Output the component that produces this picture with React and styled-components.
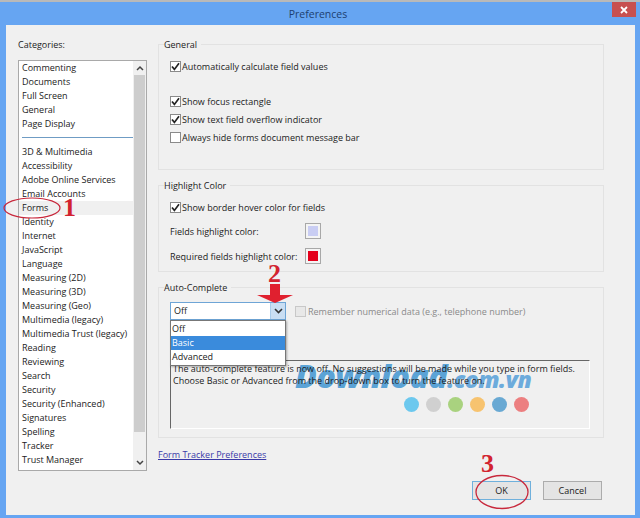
import React from 'react';
import styled, { createGlobalStyle } from 'styled-components';

const categoriesTop = ['Commenting', 'Documents', 'Full Screen', 'General', 'Page Display'];
const categories = [
  '3D & Multimedia', 'Accessibility', 'Adobe Online Services', 'Email Accounts', 'Forms', 'Identity',
  'Internet', 'JavaScript', 'Language', 'Measuring (2D)', 'Measuring (3D)', 'Measuring (Geo)',
  'Multimedia (legacy)', 'Multimedia Trust (legacy)', 'Reading', 'Reviewing', 'Search', 'Security',
  'Security (Enhanced)', 'Signatures', 'Spelling', 'Tracker', 'Trust Manager', 'Units',
];
const dots = ['#6cc8ee', '#d0d0d0', '#a9d27f', '#f7c36f', '#69a9d3', '#ec7f80'];

const Check = ({ checked, disabled }) => (
  <CheckBox $disabled={disabled}>
    {checked && (
      <svg width="9" height="9" viewBox="0 0 9 9">
        <path d="M1 4.5 L3.4 7.4 L8 1.2" fill="none" stroke="#222" strokeWidth="1.7" />
      </svg>
    )}
  </CheckBox>
);

const App = () => {
  return (
    <Page>
      <GlobalStyle />
      <TopStrip />
      <TitleBar>
        <span />
        <Title>Preferences</Title>
        <CloseBtn>
          <svg width="8" height="8" viewBox="0 0 8 8">
            <path d="M1 1 L7 7 M7 1 L1 7" stroke="#fff" strokeWidth="1.8" />
          </svg>
        </CloseBtn>
      </TitleBar>
      <Content>
        <LeftCol>
          <CatLabel>Categories:</CatLabel>
          <ListBox>
            <List>
              {categoriesTop.map((c) => <Item key={c}>{c}</Item>)}
              <Divider />
              {categories.map((c) => <Item key={c} $active={c === 'Forms'}>{c}</Item>)}
            </List>
            <ScrollBar>
              <ScrollArrow>
                <svg width="8" height="6" viewBox="0 0 8 6"><path d="M1 5 L4 2 L7 5" fill="none" stroke="#444" strokeWidth="1.5" /></svg>
              </ScrollArrow>
              <Thumb />
              <ScrollArrow>
                <svg width="8" height="6" viewBox="0 0 8 6"><path d="M1 1 L4 4 L7 1" fill="none" stroke="#444" strokeWidth="1.5" /></svg>
              </ScrollArrow>
            </ScrollBar>
          </ListBox>
        </LeftCol>
        <RightCol>
          <GeneralGroup>
            <Legend>General</Legend>
            <CheckRow><Check checked />Automatically calculate field values</CheckRow>
            <CheckRow $gap={17}><Check checked />Show focus rectangle</CheckRow>
            <CheckRow><Check checked />Show text field overflow indicator</CheckRow>
            <CheckRow><Check />Always hide forms document message bar</CheckRow>
          </GeneralGroup>
          <HighlightGroup>
            <Legend>Highlight Color</Legend>
            <CheckRow><Check checked />Show border hover color for fields</CheckRow>
            <ColorRow $gap={7}>
              <ColorLabel>Fields highlight color:</ColorLabel>
              <Swatch $color="#c9cdf3" />
            </ColorRow>
            <ColorRow $gap={9}>
              <ColorLabel>Required fields highlight color:</ColorLabel>
              <Swatch $color="#e4001b" />
            </ColorRow>
          </HighlightGroup>
          <AutoGroup>
            <Legend>Auto-Complete</Legend>
            <ComboRow>
              <ComboWrap>
                <Combo>
                  <ComboValue>Off</ComboValue>
                  <ComboBtn>
                    <svg width="9" height="6" viewBox="0 0 9 6"><path d="M1 1 L4.5 4.5 L8 1" fill="none" stroke="#333" strokeWidth="1.6" /></svg>
                  </ComboBtn>
                </Combo>
                <Menu>
                  <MenuItem>Off</MenuItem>
                  <MenuItem $selected>Basic</MenuItem>
                  <MenuItem>Advanced</MenuItem>
                </Menu>
              </ComboWrap>
              <Check disabled />
              <DisabledText>Remember numerical data (e.g., telephone number)</DisabledText>
            </ComboRow>
            <DescBox>
              <Watermark>Download<WmSuffix>.com.vn</WmSuffix></Watermark>
              <DescText>
                The auto-complete feature is now off. No suggestions will be made while you type in form fields.<br />
                Choose Basic or Advanced from the drop-down box to turn the feature on.
              </DescText>
              <Dots>
                {dots.map((d) => <Dot key={d} $color={d} />)}
              </Dots>
            </DescBox>
          </AutoGroup>
          <TrackerLink href="#">Form Tracker Preferences</TrackerLink>
          <Footer>
            <Button $primary>OK</Button>
            <Button>Cancel</Button>
          </Footer>
        </RightCol>
      </Content>

      <FormsRing width="60" height="24" viewBox="0 0 60 24">
        <ellipse cx="30" cy="12" rx="28" ry="10" fill="none" stroke="#c8283c" strokeWidth="1.2" />
      </FormsRing>
      <StepOne>1</StepOne>
      <StepTwo>2</StepTwo>
      <StepArrow width="40" height="22" viewBox="0 0 40 22">
        <path d="M16 1 H26 V12 H39 L21 20 L3 12 H16 Z" fill="#e0202f" />
      </StepArrow>
      <StepThree>3</StepThree>
      <OkRing width="56" height="36" viewBox="0 0 56 36">
        <ellipse cx="28" cy="18" rx="26" ry="16.5" fill="none" stroke="#c8283c" strokeWidth="1.3" />
      </OkRing>
    </Page>
  );
};

export default App;

const GlobalStyle = createGlobalStyle`
html,body{
    margin:0;
    padding:0;
    background:#f0f0f0;
}
`
const Page = styled.div`
position:relative;
width:640px;
height:518px;
overflow:hidden;
display:flex;
flex-direction:column;
background:#66a5f2;
font-family:"Open Sans","Noto Sans",sans-serif;
font-size:9px;
color:#222;
`
const TopStrip = styled.div`
height:2px;
background:#b9b9b9;
`
const TitleBar = styled.div`
height:23px;
display:grid;
grid-template-columns:1fr auto 1fr;
align-items:start;
padding-right:4px;
`
const Title = styled.div`
font-size:10.5px;
line-height:24px;
color:#1d3f70;
`
const CloseBtn = styled.div`
justify-self:end;
width:24px;
height:15px;
background:#c75050;
display:flex;
align-items:center;
justify-content:center;
`
const Content = styled.div`
flex:1;
display:flex;
gap:11px;
margin:0 5px 3px 6px;
padding:12px 31px 0 12px;
background:#f0f0f0;
min-height:0;
`
const LeftCol = styled.div`
width:129px;
flex-shrink:0;
`
const CatLabel = styled.div`
height:14px;
line-height:16px;
margin-bottom:9px;
`
const ListBox = styled.div`
height:411px;
box-sizing:border-box;
border:1px solid #a9a9a9;
background:#fff;
display:flex;
overflow:hidden;
`
const List = styled.div`
flex:1;
min-width:0;
`
const Item = styled.div`
height:14px;
line-height:14px;
padding-left:3px;
white-space:nowrap;
background:${(p) => (p.$active ? '#f0f0f0' : 'transparent')};
`
const Divider = styled.div`
height:1px;
margin:6px 0 7px 3px;
background:#6f9cc4;
`
const ScrollBar = styled.div`
width:13px;
display:flex;
flex-direction:column;
background:#f0f0f0;
`
const ScrollArrow = styled.div`
height:14px;
display:flex;
align-items:center;
justify-content:center;
`
const Thumb = styled.div`
flex:1;
background:#cdcdcd;
margin:0 1px 24px 1px;
`
const RightCol = styled.div`
flex:1;
min-width:0;
display:flex;
flex-direction:column;
`
const Group = styled.fieldset`
margin:0;
padding:0 11px;
border:1px solid #e2e2e2;
min-width:0;
`
const GeneralGroup = styled(Group)`
padding-top:6px;
padding-bottom:23px;
`
const HighlightGroup = styled(Group)`
margin-top:8px;
padding-top:6px;
padding-bottom:7px;
`
const AutoGroup = styled(Group)`
margin-top:8px;
padding-top:8px;
padding-bottom:8px;
`
const Legend = styled.legend`
height:14px;
line-height:16px;
padding:0 4px 0 0;
margin-left:-6px;
`
const CheckRow = styled.div`
height:18px;
display:flex;
align-items:center;
gap:1px;
margin-top:${(p) => p.$gap || 0}px;
`
const CheckBox = styled.span`
width:11px;
height:11px;
box-sizing:border-box;
flex-shrink:0;
border:1px solid ${(p) => (p.$disabled ? '#c8c8c8' : '#8a8a8a')};
background:${(p) => (p.$disabled ? '#e8e8e8' : '#fff')};
display:flex;
align-items:center;
justify-content:center;
`
const ColorRow = styled.div`
height:16px;
margin-top:${(p) => p.$gap}px;
display:flex;
align-items:center;
`
const ColorLabel = styled.div`
width:135px;
`
const Swatch = styled.div`
width:16px;
height:16px;
box-sizing:border-box;
border:1px solid #a8a8a8;
outline:2px solid #f4f4f4;
outline-offset:-3px;
background:${(p) => p.$color};
`
const ComboRow = styled.div`
height:18px;
display:flex;
align-items:center;
`
const ComboWrap = styled.div`
position:relative;
width:116px;
margin-right:9px;
`
const Combo = styled.div`
height:18px;
box-sizing:border-box;
border:1px solid #6ea5d6;
background:#fff;
display:flex;
`
const ComboValue = styled.div`
flex:1;
line-height:16px;
padding-left:3px;
`
const ComboBtn = styled.div`
width:14px;
background:#c9def3;
border-left:1px solid #a9cbea;
display:flex;
align-items:center;
justify-content:center;
`
const Menu = styled.div`
position:absolute;
z-index:3;
left:0;
right:0;
top:18px;
box-sizing:border-box;
height:46px;
padding-top:1px;
background:#fff;
border:1px solid #777;
box-shadow:1px 1px 2px rgba(0,0,0,.3);
`
const MenuItem = styled.div`
height:14px;
line-height:14px;
padding-left:1px;
color:${(p) => (p.$selected ? '#fff' : '#222')};
background:${(p) => (p.$selected ? '#3a8bdc' : 'transparent')};
`
const DisabledText = styled.div`
margin-left:2px;
color:#8a8a8a;
`
const DescBox = styled.div`
position:relative;
width:420px;
height:69px;
box-sizing:border-box;
margin-top:40px;
padding:2px 0 0 2px;
border-style:solid;
border-width:1px;
border-color:#666 #fff #fff #666;
line-height:12px;
color:#1c1c1c;
`
const DescText = styled.div`
position:relative;
`
const Watermark = styled.div`
position:absolute;
left:124px;
top:-3px;
font-family:"Open Sans",sans-serif;
font-weight:800;
font-style:italic;
font-size:32px;
line-height:35px;
letter-spacing:-.5px;
white-space:nowrap;
color:#5ba3d6;
`
const WmSuffix = styled.span`
font-size:23px;
color:#6cabdc;
`
const Dots = styled.div`
position:absolute;
left:233px;
top:36px;
display:flex;
gap:7px;
`
const Dot = styled.span`
width:15px;
height:15px;
border-radius:50%;
background:${(p) => p.$color};
`
const TrackerLink = styled.a`
margin-top:10px;
height:14px;
line-height:14px;
color:#3a3aa8;
`
const Footer = styled.div`
margin-top:auto;
padding:0 2px 15px 0;
display:flex;
justify-content:flex-end;
gap:12px;
`
const Button = styled.div`
width:59px;
height:19px;
box-sizing:border-box;
border:1px solid ${(p) => (p.$primary ? '#6fb0dc' : '#acacac')};
background:#e4e4e4;
text-align:center;
line-height:17px;
`
const Overlay = styled.svg`
position:absolute;
z-index:5;
pointer-events:none;
`
const FormsRing = styled(Overlay)`
left:2px;
top:196px;
`
const OkRing = styled(Overlay)`
left:474px;
top:474px;
`
const StepArrow = styled(Overlay)`
left:254px;
top:283px;
`
const Step = styled.div`
position:absolute;
z-index:5;
font-family:"Liberation Serif",serif;
font-weight:700;
color:#d2232f;
font-size:26px;
line-height:26px;
`
const StepOne = styled(Step)`
left:63px;
top:195px;
`
const StepTwo = styled(Step)`
left:268px;
top:261px;
`
const StepThree = styled(Step)`
left:481px;
top:451px;
`
